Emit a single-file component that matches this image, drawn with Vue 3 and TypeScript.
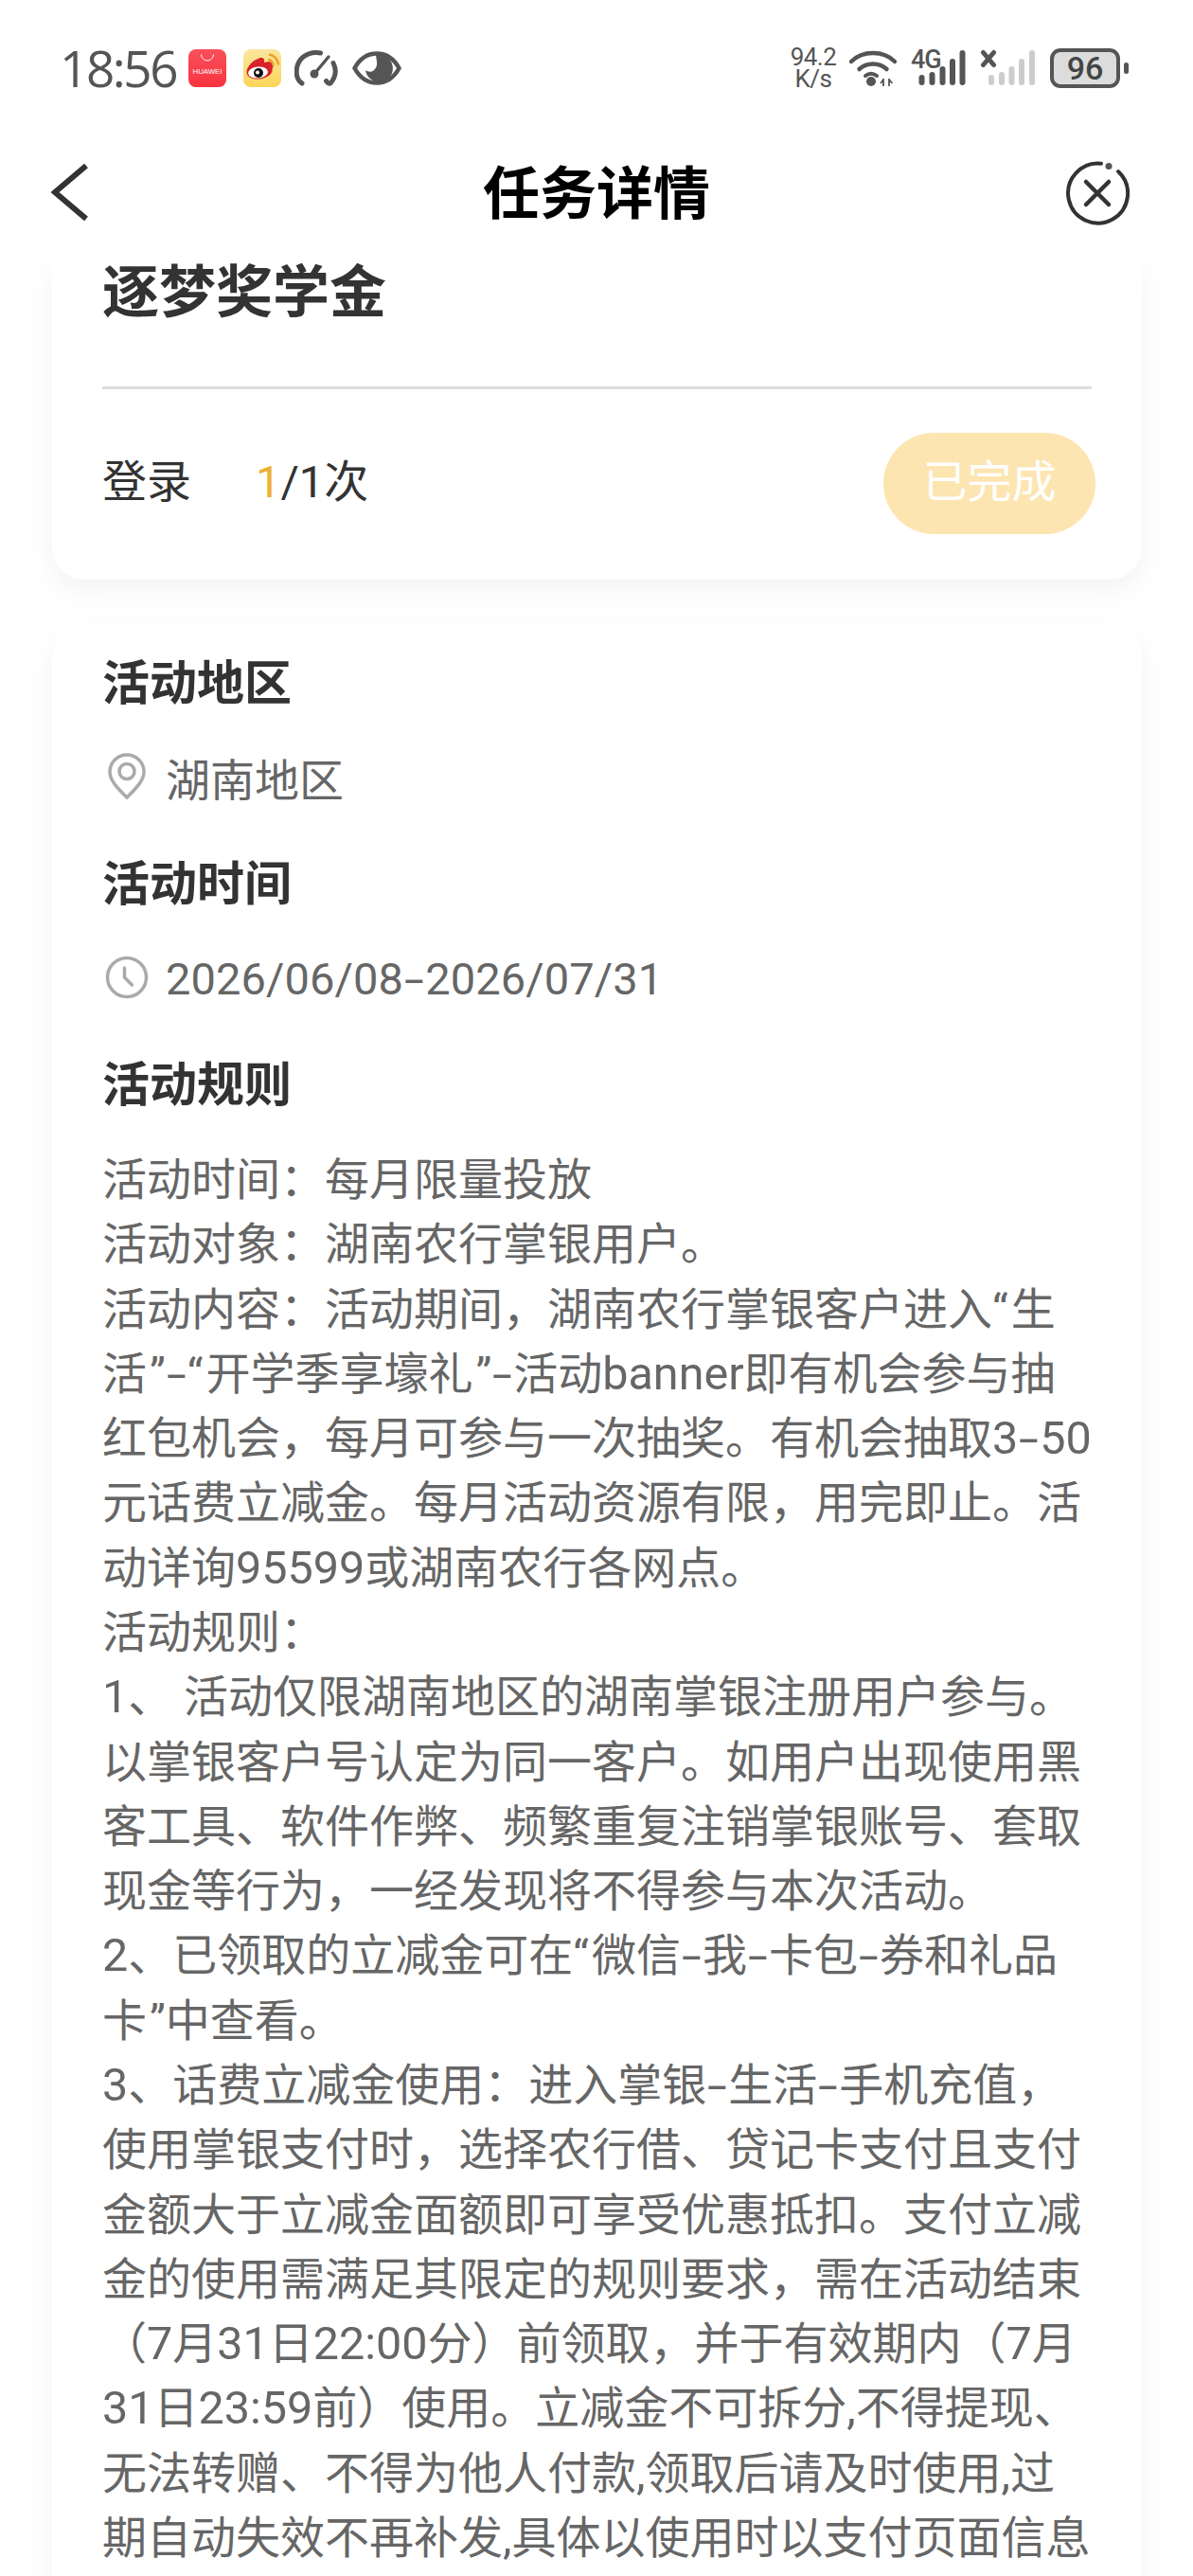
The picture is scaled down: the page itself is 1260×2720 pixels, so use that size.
<template>
  <div class="page">
    <div class="status-bar">
      <div class="status-left">
        <span class="clock">18:56</span>
        <svg class="ic-app" width="40" height="40" viewBox="0 0 40 40">
          <defs>
            <linearGradient id="hw" x1="0" y1="0" x2="0" y2="1">
              <stop offset="0" stop-color="#f9505c" />
              <stop offset="1" stop-color="#f8333f" />
            </linearGradient>
          </defs>
          <rect width="40" height="40" rx="8" fill="url(#hw)" />
          <path d="M13.500 5.500c.6 8.500 12.400 8.500 13 0" fill="none" stroke="#fff" stroke-width="1" />
          <text x="20" y="26" text-anchor="middle" class="hw-text">HUAWEI</text>
        </svg>
        <svg class="ic-app weibo" width="40" height="40" viewBox="0 0 40 40">
          <defs>
            <linearGradient id="wb" x1="0" y1="0" x2="0" y2="1">
              <stop offset="0" stop-color="#fbe6a0" />
              <stop offset="1" stop-color="#fcd558" />
            </linearGradient>
          </defs>
          <rect width="40" height="40" rx="8" fill="url(#wb)" />
          <path d="M3.500 24c0-5 6-12 13-14.500 4-1.300 6.500.5 5.500 4.500 5-1.500 10-.5 9.500 4 0 1-.3 1.500-1 2.500 1.500 5-6 11-15 11-7 0-12-2.500-12-7.500z" fill="#d9222a" />
          <ellipse cx="15.500" cy="24.500" rx="10.500" ry="6" fill="#fff" transform="rotate(-6 15.500 24.500)" />
          <circle cx="16" cy="25" r="5" fill="#111" />
          <circle cx="15" cy="24.500" r="2" fill="#fff" />
          <path d="M26 11a6.500 6.500 0 0 1 5.500 6M27 5.500a11.500 11.500 0 0 1 10 11" fill="none" stroke="#f0a020" stroke-width="2.400" />
        </svg>
        <svg width="46" height="40" viewBox="0 0 46 40" fill="none" stroke="#555" stroke-linecap="round">
          <path d="M8 36C3 33 1.500 27 2.500 20 4 10 13 3 24 3.500c1.500 0 2.500.2 3.500.5" stroke-width="5" />
          <path d="M41 14.500c3.500 7 2.500 15-3 21.500-1.500 1-3.500-1-4.500-2.500" stroke-width="5" />
          <path d="M21 26 36 8" stroke-width="3.400" />
          <circle cx="21" cy="26" r="4.500" fill="#555" stroke="none" />
        </svg>
        <svg class="eye" width="52" height="36" viewBox="0 0 52 36">
          <path d="M2.500 18C8 8 16 2.500 26 2.500S44 8 49.500 18C44 28 36 33.500 26 33.500S8 28 2.500 18z" fill="#fff" stroke="#555" stroke-width="4.500" />
          <path d="M25 4A14.500 14.500 0 1 1 14 20c2.500 2 6 2.400 8.500.5 3-2.200 4-6 3.500-9-.2-2-.6-5-1-7.500z" fill="#555" />
        </svg>
      </div>
      <div class="status-right">
        <div class="speed"><span>94.2</span><span>K/s</span></div>
        <svg class="wifi" width="50" height="40" viewBox="0 0 50 40" fill="none" stroke="#555" stroke-linecap="round">
          <path d="M2 13C14 1 36 1 48 13" stroke-width="4.500" />
          <path d="M10.500 21c8-7.500 21-7.500 29 0" stroke-width="4.500" />
          <path d="M17 28c3.800-3 8-3 12 0" stroke-width="4" />
          <circle cx="23" cy="34" r="5" fill="#555" stroke="none" />
          <path d="M36 31v8M33 36l3-4M42 31v8M45.500 36l-3.500-4" stroke-width="1.800" stroke-linecap="butt" />
        </svg>
        <div class="signal">
          <span class="net">4G</span>
          <svg width="58" height="40" viewBox="0 0 58 40" fill="#555">
            <rect x="8.500" y="27" width="6" height="11" rx="3" />
            <rect x="19.500" y="24" width="6" height="14" rx="3" />
            <rect x="30.500" y="18" width="6" height="20" rx="3" />
            <rect x="41" y="10" width="6" height="28" rx="3" />
            <rect x="51.500" y="1" width="6" height="37" rx="3" />
          </svg>
        </div>
        <svg class="signal-off" width="58" height="40" viewBox="0 0 58 40">
          <path d="M3.500 3.500l11 13M14.500 3.500l-11 13" stroke="#555" stroke-width="5" stroke-linecap="round" />
          <g fill="#ccc">
            <rect x="9" y="27" width="6" height="11" rx="3" />
            <rect x="20" y="24" width="6" height="14" rx="3" />
            <rect x="30.500" y="18" width="6" height="20" rx="3" />
            <rect x="41" y="10" width="6" height="28" rx="3" />
            <rect x="52" y="1" width="6" height="37" rx="3" />
          </g>
        </svg>
        <div class="battery"><span>96</span></div>
        <i class="battery-nub"></i>
      </div>
    </div>

    <div class="nav-bar">
      <svg class="back" width="40" height="60" viewBox="0 0 40 60" fill="none" stroke="#333" stroke-width="6">
        <path d="M37 2 4 30l33 28" />
      </svg>
      <div class="nav-title">任务详情</div>
      <svg class="close" width="68" height="68" viewBox="0 0 68 68" fill="none" stroke="#333" stroke-linecap="round">
        <path d="M56 11A31.500 31.500 0 1 1 38 2.800" stroke-width="4" />
        <circle cx="46" cy="5.500" r="3.500" fill="#555" stroke="none" />
        <path d="M22 22l24 24M46 22 22 46" stroke-width="4.500" />
      </svg>
    </div>

    <div class="scroller">
      <section class="card task-card">
        <h1 class="task-name">逐梦奖学金</h1>
        <div class="divider"></div>
        <div class="task-row">
          <span class="task-label">登录</span>
          <span class="task-count"><em>1</em>/1次</span>
          <button class="done-btn">已完成</button>
        </div>
      </section>

      <section class="card info-card">
        <h2 class="info-title">活动地区</h2>
        <div class="info-row">
          <span class="info-icon">
            <svg width="42" height="50" viewBox="0 0 42 50" fill="none" stroke="#aaa" stroke-width="3.500">
              <path d="M21 47C13 39 3 30 3 20a18 18 0 0 1 36 0c0 10-10 19-18 27z" />
              <circle cx="21" cy="19.500" r="8" />
            </svg>
          </span>
          <span>湖南地区</span>
        </div>
        <h2 class="info-title second">活动时间</h2>
        <div class="info-row">
          <span class="info-icon">
            <svg width="46" height="46" viewBox="0 0 46 46" fill="none" stroke="#aaa" stroke-width="3.500">
              <circle cx="23" cy="23" r="20.500" />
              <path d="M20.500 13v10l8 8" stroke-linecap="round" />
            </svg>
          </span>
          <span class="date">2026/06/08<i class="dash">-</i>2026/07/31</span>
        </div>
        <h2 class="info-title second">活动规则</h2>
        <div class="rules">
          <div v-for="line in ruleLines" :key="line" class="rule-line">
            <span
              v-for="(seg, i) in splitLine(line)"
              :key="i"
              :class="segClass(seg)"
            >{{ seg }}</span>
          </div>
        </div>
      </section>
    </div>
  </div>
</template>

<script setup lang="ts">
const ruleLines: string[] = [
  '活动时间：每月限量投放',
  '活动对象：湖南农行掌银用户。',
  '活动内容：活动期间，湖南农行掌银客户进入“生',
  '活”-“开学季享壕礼”-活动banner即有机会参与抽',
  '红包机会，每月可参与一次抽奖。有机会抽取3-50',
  '元话费立减金。每月活动资源有限，用完即止。活',
  '动详询95599或湖南农行各网点。',
  '活动规则：',
  '1、 活动仅限湖南地区的湖南掌银注册用户参与。',
  '以掌银客户号认定为同一客户。如用户出现使用黑',
  '客工具、软件作弊、频繁重复注销掌银账号、套取',
  '现金等行为，一经发现将不得参与本次活动。',
  '2、已领取的立减金可在“微信-我-卡包-券和礼品',
  '卡”中查看。',
  '3、话费立减金使用：进入掌银-生活-手机充值，',
  '使用掌银支付时，选择农行借、贷记卡支付且支付',
  '金额大于立减金面额即可享受优惠抵扣。支付立减',
  '金的使用需满足其限定的规则要求，需在活动结束',
  '（7月31日22:00分）前领取，并于有效期内（7月',
  '31日23:59前）使用。立减金不可拆分,不得提现、',
  '无法转赠、不得为他人付款,领取后请及时使用,过',
  '期自动失效不再补发,具体以使用时以支付页面信息',
]

// latin runs and dashes are a bit wider in the original font
const splitLine = (line: string): string[] =>
  line.split(/(-|[“”]|[0-9A-Za-z:,]+)/).filter(Boolean)

const segClass = (seg: string): string => {
  if (seg === '-') return 'dash'
  if (seg === '“') return 'quote-open'
  if (seg === '”') return 'quote-close'
  if (/^[0-9A-Za-z:,]+$/.test(seg)) return 'latin'
  return ''
}
</script>

<style>
html,
body {
  margin: 0;
  height: 2720px;
  overflow: hidden;
  background: #fff;
}
</style>

<style scoped>
.page {
  width: 1260px;
  height: 2720px;
  display: flex;
  flex-direction: column;
  overflow: hidden;
  background: #fff;
  font-family: Roboto, "Noto Sans CJK SC", sans-serif;
  color: #333;
}

.status-bar {
  height: 142px;
  padding: 52px 68px 0 63px;
  box-sizing: border-box;
  display: flex;
  justify-content: space-between;
  align-items: flex-start;
  flex-shrink: 0;
}
.status-left,
.status-right {
  display: flex;
  align-items: center;
  height: 40px;
}
.clock {
  font-family: "Open Sans", Roboto, sans-serif;
  font-size: 53px;
  line-height: 40px;
  letter-spacing: -2.400px;
  color: #555;
  margin-right: 13px;
  white-space: nowrap;
}
.ic-app {
  display: block;
}
.weibo {
  margin: 0 14px 0 18px;
}
.eye {
  margin-left: 15px;
}
.hw-text {
  font-size: 7.800px;
  fill: #fff;
  font-family: "Liberation Sans", sans-serif;
}
.speed {
  display: flex;
  flex-direction: column;
  align-items: center;
  width: 52px;
  margin-right: 12px;
  font-size: 26px;
  line-height: 23px;
  color: #555;
  letter-spacing: -0.5px;
}
.signal {
  position: relative;
  margin-left: 15px;
  width: 58px;
  height: 40px;
}
.signal svg {
  display: block;
}
.net {
  position: absolute;
  left: 0;
  top: -1px;
  font-size: 27px;
  line-height: 24px;
  font-weight: 500;
  color: #555;
  letter-spacing: -1px;
}
.signal-off {
  margin-left: 15px;
}
.battery {
  margin-left: 16px;
  width: 74px;
  height: 42px;
  box-sizing: border-box;
  border: 4px solid #555;
  border-radius: 11px;
  background: #dcdcdc;
  display: flex;
  align-items: center;
  justify-content: center;
  font-size: 34px;
  font-weight: 500;
  color: #444;
}
.battery-nub {
  width: 5px;
  height: 12px;
  margin-left: 4px;
  border-radius: 3px;
  background: #555;
}

.nav-bar {
  position: relative;
  height: 133px;
  flex-shrink: 0;
  display: flex;
  align-items: flex-start;
  justify-content: space-between;
  padding: 31px 67px 0 54px;
  box-sizing: border-box;
}
.close {
  margin-top: -3px;
}
.nav-title {
  position: absolute;
  left: 0;
  right: 0;
  top: 29px;
  text-align: center;
  font-size: 60px;
  line-height: 70px;
  font-weight: 700;
  color: #000;
}

.scroller {
  flex: 1;
  overflow: hidden;
  padding-bottom: 40px;
}
.card {
  margin: 0 54px 0 55px;
  padding: 0 53px 0 53px;
  background: #fff;
  border-radius: 34px;
  box-shadow: 0 12px 30px rgba(0, 0, 0, 0.05);
}
.task-card {
  height: 337px;
  border-top-left-radius: 0;
  border-top-right-radius: 0;
}
.task-name {
  margin: 0;
  font-size: 60px;
  line-height: 70px;
  font-weight: 700;
  color: #333;
}
.divider {
  height: 3px;
  margin: 63px 0 0;
  background: #ddd;
}
.task-row {
  display: flex;
  align-items: center;
  margin-top: 46px;
  height: 107px;
  font-size: 47px;
  color: #333;
}
.task-label {
  width: 162px;
  padding-bottom: 13px;
}
.task-count {
  padding-bottom: 13px;
}
.task-count em {
  font-style: normal;
  color: #efb02e;
}
.done-btn {
  margin-left: auto;
  margin-right: -4px;
  width: 224px;
  height: 107px;
  padding: 0 0 12px;
  border: 0;
  border-radius: 54px;
  background: #fde5b1;
  color: #fff;
  font: inherit;
  font-size: 47px;
}

.info-card {
  margin-top: 48px;
  padding-top: 28px;
  min-height: 2200px;
}
.info-title {
  margin: 0;
  font-size: 50px;
  line-height: 68px;
  font-weight: 700;
  color: #333;
}
.info-title.second {
  margin-top: 46px;
}
.info-row {
  display: flex;
  align-items: center;
  gap: 18px;
  height: 68px;
  margin-top: 30px;
  font-size: 47px;
  color: #666;
}
.info-icon {
  width: 46px;
  margin-left: 3px;
  display: flex;
  justify-content: center;
  flex-shrink: 0;
}
.date {
  padding-top: 3px;
  letter-spacing: 0.1px;
}
.rules {
  margin-top: 32px;
}
.rule-line {
  font-size: 47px;
  line-height: 68.280px;
  color: #666;
  white-space: nowrap;
}
.latin {
  font-size: 48.500px;
}
.dash {
  display: inline-block;
  font-style: normal;
  padding: 0 5px;
  transform: scaleX(1.6);
}
.quote-open {
  padding-right: 3px;
}
.quote-close {
  padding-left: 3px;
}
</style>
